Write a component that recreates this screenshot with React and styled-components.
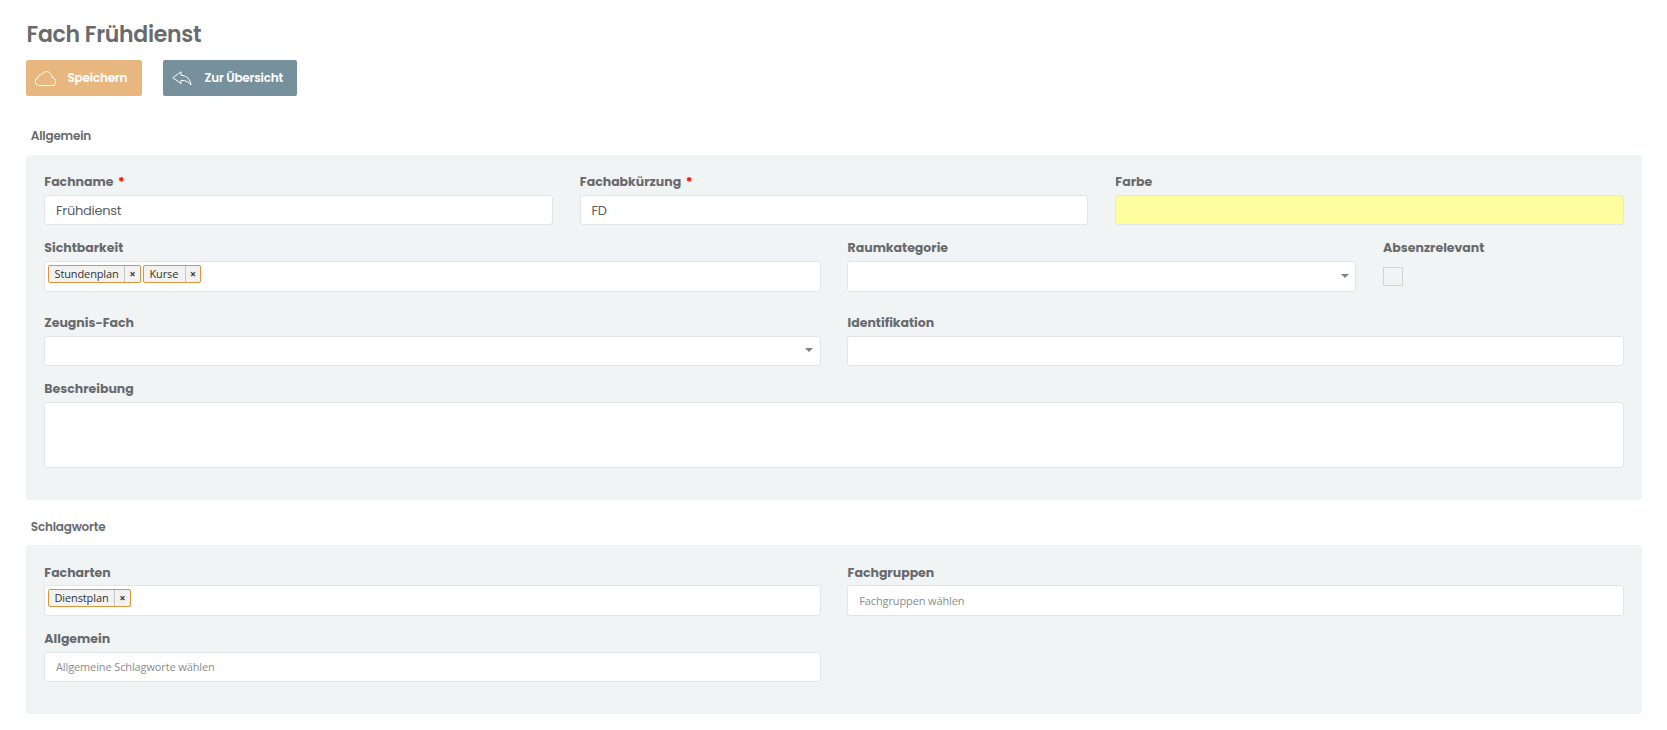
import React from 'react';
import styled, { createGlobalStyle } from 'styled-components';

const GlobalStyle = createGlobalStyle`
  * { box-sizing: border-box; }
  body {
    margin: 0;
    background: #fff;
    color: #696a6d;
    font-family: Poppins, Inter, sans-serif;
    font-size: 13px;
  }
`;

const Page = styled.main`
  padding: 22px 25px 16px 26px;
`;

const Title = styled.h1`
  margin: 0;
  padding-left: 0.5px;
  font-size: 22px;
  line-height: 26px;
  font-weight: 600;
  letter-spacing: -0.27px;
`;

const Toolbar = styled.div`
  display: flex;
  gap: 21px;
  margin-top: 12px;
`;

const Button = styled.button`
  display: flex;
  align-items: center;
  width: ${(p) => p.$width}px;
  height: 36px;
  padding: 0 0 0 ${(p) => p.$inset}px;
  border: 0;
  border-radius: 2px;
  background: ${(p) => p.$color};
  color: #fff;
  font: 600 12px/36px Poppins, Inter, sans-serif;
  letter-spacing: -0.2px;
  white-space: nowrap;

  svg { flex: none; margin-right: ${(p) => p.$gap}px; }
`;

const Section = styled.section`
  margin-top: ${(p) => p.$top}px;
`;

const SectionTitle = styled.h2`
  margin: 0 0 0 4.8px;
  height: ${(p) => p.$height}px;
  font-size: 12px;
  line-height: 14px;
  font-weight: 600;
  letter-spacing: -0.2px;
`;

const Panel = styled.div`
  height: ${(p) => p.$height}px;
  padding: 17px 18.15px 0 18px;
  border-radius: 4px;
  background: #f0f4f5;
`;

const Row = styled.div`
  display: grid;
  grid-template-columns: repeat(12, minmax(0, 1fr));
  column-gap: 26.7px;
  height: ${(p) => p.$height}px;
`;

const Field = styled.div`
  grid-column: span ${(p) => p.$span};
`;

const Label = styled.label`
  display: block;
  height: 23px;
  padding: ${(p) => p.$drop}px 0 0 0.3px;
  font-size: 12.5px;
  line-height: 18px;
  font-weight: 700;
  white-space: nowrap;
`;

const Required = styled.span`
  margin-left: 4.5px;
  color: #f00;
`;

const Control = styled.div`
  display: flex;
  align-items: center;
  justify-content: ${(p) => (p.$select ? 'flex-end' : 'flex-start')};
  height: ${(p) => p.$height || 30}px;
  padding: 1px ${(p) => (p.$select ? 6.5 : 11)}px 0 11px;
  border: 1px solid #e2e4e6;
  border-radius: 3px;
  background: ${(p) => p.$fill || '#fff'};
  color: #5c5d60;
  font-size: 13px;
  letter-spacing: -0.26px;
`;

const Caret = styled.span`
  border: 4px solid transparent;
  border-top-color: #808080;
  border-bottom: 0;
  margin-bottom: 3px;
`;

const Placeholder = styled.span`
  margin-bottom: 1px;
  color: #8c8c8c;
  font: 11px/16px "Open Sans", sans-serif;
  letter-spacing: -0.12px;
`;

const TagBox = styled(Control)`
  align-items: flex-start;
  gap: 2px;
  padding: 3px;
`;

const Tag = styled.span`
  display: flex;
  height: 18px;
  border: 1px solid #e0943a;
  border-radius: 2px;
  background: #f2f2f2;
  color: #333;
  font: 11px/16px "Open Sans", sans-serif;
  letter-spacing: -0.12px;
`;

const TagText = styled.span`
  width: ${(p) => p.$width}px;
  padding-left: 5.5px;
  white-space: nowrap;
`;

const TagClose = styled.span`
  width: ${(p) => p.$width}px;
  border-left: 1px solid #c8c8c8;
  text-align: center;
  font-weight: 700;
  font-size: 10.5px;
`;

const Checkbox = styled.span`
  display: block;
  width: 20px;
  height: 19px;
  margin-top: 6px;
  border: 1px solid #d6d3cc;
`;

const CloudIcon = () => (
  <svg width="22" height="15" viewBox="0 0 22 15" fill="none" stroke="#fff" strokeWidth="1">
    <path d="M4.500 14.500h13a3.900 3.900 0 0 0 .6-7.800C18 3 15.600.6 12.600.6c-2.300 0-4 1.200-4.800 3.200-2-.6-3.800.9-3.700 3A3.950 3.950 0 0 0 4.500 14.500z" />
  </svg>
);

const ReplyIcon = () => (
  <svg width="20" height="15" viewBox="0 0 20 15" fill="none" stroke="#fff" strokeWidth="1" strokeLinejoin="round">
    <path d="M.8 6.700 9 .8v3.500c5.500.3 9.300 3.600 10 9.700-2-3.100-5.200-4.700-10-4.700v3.200z" />
  </svg>
);

const TagItem = ({ text, width, close = 16 }) => (
  <Tag>
    <TagText $width={width}>{text}</TagText>
    <TagClose $width={close}>×</TagClose>
  </Tag>
);

const FieldBlock = ({ span, label, drop = 1, required, children }) => (
  <Field $span={span}>
    <Label $drop={drop}>
      {label}
      {required && <Required>*</Required>}
    </Label>
    {children}
  </Field>
);

export default function App() {
  return (
    <>
      <GlobalStyle />
      <Page>
        <Title>Fach Frühdienst</Title>
        <Toolbar>
          <Button $color="#e8b77f" $width={116} $inset={7.500} $gap={12}><CloudIcon />Speichern</Button>
          <Button $color="#76919c" $width={134} $inset={9} $gap={12.5}><ReplyIcon />Zur Übersicht</Button>
        </Toolbar>

        <Section $top={33}>
          <SectionTitle $height={26}>Allgemein</SectionTitle>
          <Panel $height={345}>
            <Row $height={66}>
              <FieldBlock span={4} label="Fachname" required><Control>Frühdienst</Control></FieldBlock>
              <FieldBlock span={4} label="Fachabkürzung" required><Control>FD</Control></FieldBlock>
              <FieldBlock span={4} label="Farbe"><Control $fill="#fffe9f" /></FieldBlock>
            </Row>
            <Row $height={75}>
              <FieldBlock span={6} label="Sichtbarkeit">
                <TagBox $height={31}>
                  <TagItem text="Stundenplan" width={75} />
                  <TagItem text="Kurse" width={41} close={15} />
                </TagBox>
              </FieldBlock>
              <FieldBlock span={4} label="Raumkategorie"><Control $select $height={31}><Caret /></Control></FieldBlock>
              <FieldBlock span={2} label="Absenzrelevant"><Checkbox /></FieldBlock>
            </Row>
            <Row $height={66}>
              <FieldBlock span={6} label="Zeugnis-Fach"><Control $select><Caret /></Control></FieldBlock>
              <FieldBlock span={6} label="Identifikation"><Control /></FieldBlock>
            </Row>
            <Row $height={90}>
              <FieldBlock span={12} label="Beschreibung"><Control $height={66} /></FieldBlock>
            </Row>
          </Panel>
        </Section>

        <Section $top={20}>
          <SectionTitle $height={25}>Schlagworte</SectionTitle>
          <Panel $height={169}>
            <Row $height={67}>
              <FieldBlock span={6} label="Facharten" drop={2}>
                <TagBox $height={31}><TagItem text="Dienstplan" width={65} /></TagBox>
              </FieldBlock>
              <FieldBlock span={6} label="Fachgruppen" drop={2}>
                <Control $height={31}><Placeholder>Fachgruppen wählen</Placeholder></Control>
              </FieldBlock>
            </Row>
            <Row $height={66}>
              <FieldBlock span={6} label="Allgemein">
                <Control><Placeholder>Allgemeine Schlagworte wählen</Placeholder></Control>
              </FieldBlock>
            </Row>
          </Panel>
        </Section>
      </Page>
    </>
  );
}
